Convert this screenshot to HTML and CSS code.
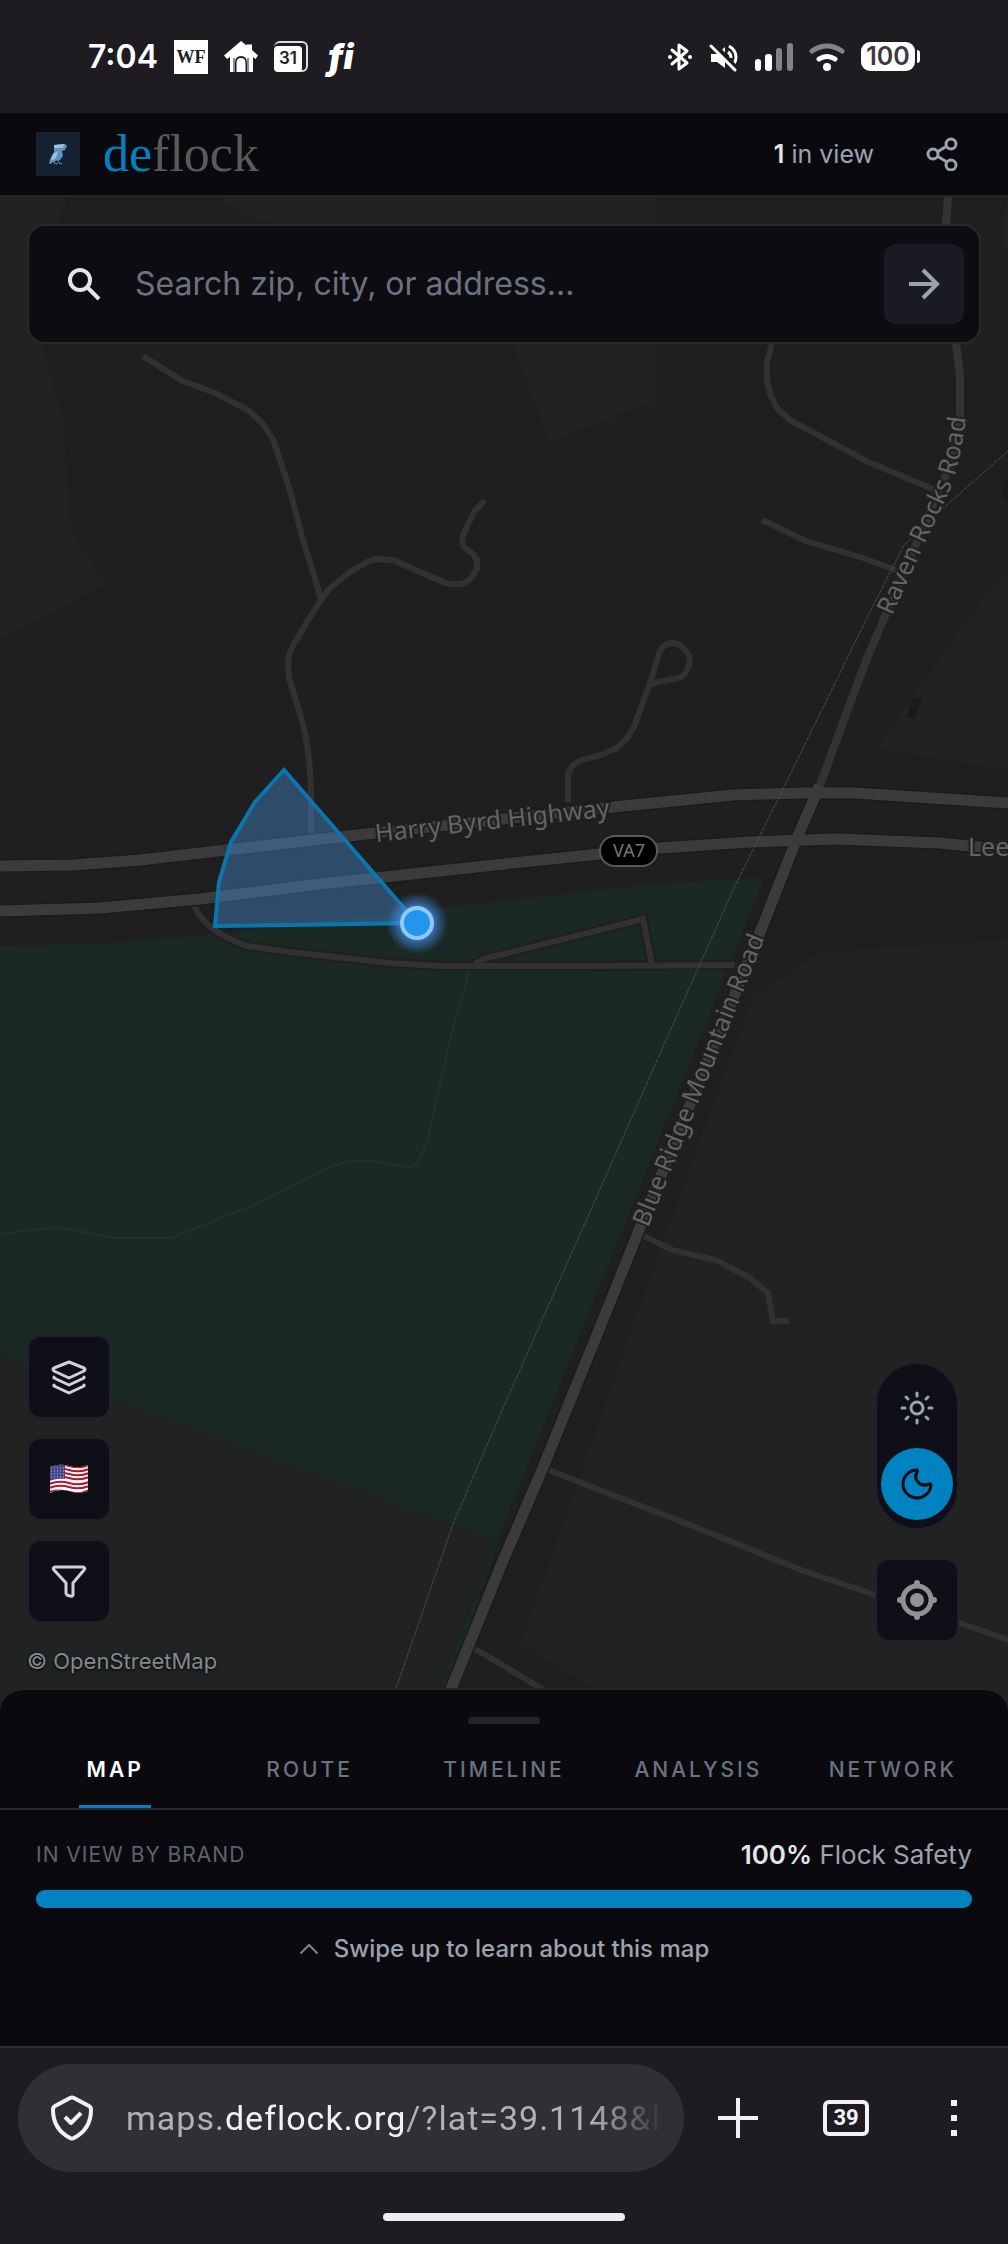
FILE: index.html
```html
<!DOCTYPE html>
<html lang="en">
<head>
<meta charset="utf-8">
<meta name="viewport" content="width=device-width, initial-scale=1">
<title>DeFlock Map</title>
<link rel="stylesheet" href="styles.css">
</head>
<body>
<div class="status">
  <div class="status-group status-left">
    <span class="clock">7:04</span>
    <span class="note-wf">WF</span>
    <svg class="note" viewBox="0 0 34 34"><path fill="#fff" d="M17 1 22.500 5.500V4.500H28V10L34 15.500 31.500 19 29 17V32H23V23Q23 16 17 16T11 23V32H6V17L3 19 0 15.500Z"/><path d="M24 18V32M10 18V32" stroke="#1e1c21" stroke-width="1"/><path fill="#fff" d="M12.500 32V23Q12.500 18 17 18T21.500 23V32Z"/></svg>
    <span class="note-cal"><span class="cal-day">31</span></span>
    <span class="note-fi">fi</span>
  </div>
  <div class="status-group status-right">
    <svg width="26" height="30" viewBox="0 0 26 30" fill="none" stroke="#fff" stroke-width="3" stroke-linecap="round" stroke-linejoin="round"><path d="M5 8 20 21 12 27V3L20 9 5 22"/><circle cx="3" cy="15" r="1" stroke-width="2"/><circle cx="23" cy="15" r="1" stroke-width="2"/></svg>
    <svg width="30" height="30" viewBox="0 0 30 30" fill="none"><path d="M2 12H8L16 5V26L8 20H2Z" fill="#fff"/><path d="M20 4Q27 8 27 15 27 19 25 22M19 10Q22 12 22 16" stroke="#fff" stroke-width="3"/><path d="M4 2 28 28" stroke="#1e1c21" stroke-width="6"/><path d="M2 4 26 28" stroke="#fff" stroke-width="3" stroke-linecap="round"/></svg>
    <svg width="38" height="28" viewBox="0 0 38 28"><rect y="16" width="6" height="12" rx="3" fill="#fff"/><rect x="10" y="11" width="7" height="17" rx="3" fill="#fff"/><rect x="21" y="5" width="6" height="23" rx="3" fill="#858387"/><rect x="32" width="6" height="28" rx="3" fill="#858387"/></svg>
    <svg width="36" height="28" viewBox="0 0 36 28" fill="none" stroke-linecap="round" stroke-width="5"><path d="M3 8Q18-2 33 8" stroke="#858387"/><path d="M10 16Q18 11 26 16" stroke="#fff"/><circle cx="18" cy="24" r="4" fill="#fff"/></svg>
    <span class="battery">100</span>
  </div>
</div>

<header class="topbar">
  <svg class="logo" viewBox="0 0 44 44"><rect width="44" height="44" fill="#152030"/><path fill="#5e92be" d="M18 13 29 12 31 14 29 18 26 19 27 24 24 28 19 29 14 32 13 31 15 25 18 20Z"/><path fill="#9cc2e0" d="M18 13 28 12 27 16 18 16ZM17 22 22 19 20 26 15 29Z"/><path d="M19 28 18 31 22 32M22 27 23 31 26 32M16 30 14 32" fill="none" stroke="#5e92be"/></svg>
  <a class="wordmark" href="#"><span class="wordmark-de">de</span>flock</a>
  <p class="count"><strong>1</strong> in view</p>
  <button class="share" aria-label="Share">
    <svg width="32" height="34" viewBox="0 0 32 34" fill="none" stroke="#9ca3af" stroke-width="3"><circle cx="25" cy="7" r="5"/><circle cx="7" cy="17" r="5"/><circle cx="25" cy="28" r="5"/><path d="M11 15 21 9M11 19 21 25"/></svg>
  </button>
</header>

<main class="map">
  <svg class="map-canvas" viewBox="0 197 1008 1515" preserveAspectRatio="xMidYMin slice" role="img" aria-label="Map">
    <defs>
      <path id="byrd" d="M376 842 613 816"/>
      <path id="raven" d="M892 616 925 543 949 492Q964 453 967 400"/>
      <path id="blue" d="M648 1228 772 920"/>
      <radialGradient id="glow"><stop offset=".5" stop-color="#4a9cf0" stop-opacity=".7"/><stop offset="1" stop-color="#3b82f6" stop-opacity="0"/></radialGradient>
    </defs>
    <rect y="197" width="1008" height="1515" fill="#1f1f1f"/>
    <g fill="#202321">
      <path d="M0 197H67L58 224 42 346 62 415 71 530 106 584 36 620 0 639Z"/>
      <path d="M218 197 245 216 280 225 513 344 549 442 655 400V197Z"/>
      <path d="M1008 570 966 620 877 748 1008 770ZM1008 200 1002 230 1008 263Z"/>
      <path d="M1008 940 819 952 754 997 737 1040 642 1300 521 1643 591 1687 640 1712H1008Z"/>
      <path d="M0 1354V1712H430L495 1540Z"/>
    </g>
    <g fill="#1a2924">
      <path d="M0 946 50 945 130 942 215 934 400 912 504 901 643 885 720 880 764 878 704 1028 594 1300 497 1541 350 1486 110 1396 0 1354Z"/>
      <path d="M495 1540 474 1600 430 1712H438L481 1602 477 1600 499 1540Z"/>
    </g>
    <path fill="#191a19" d="M913 697 922 699 915 719 907 717ZM1008 480 1001 493 1008 502Z"/>
    <path class="trail" d="M470 968 450 1040 430 1130Q420 1169 408 1167L387 1164Q350 1155 325 1170L258 1203 172 1238H115L57 1227 0 1234"/>
    <g class="casing">
      <path d="M194 905Q203 930 247 946L290 952 390 963 440 966H590L735 965M475 964 485 958 504 954 643 919 652 965"/>
    </g>
    <g class="lane">
      <path d="M143 356 181 380 215 393 248 410 262 423 273 439 289 487 303 540 317 585 321 600 308 620 299 636Q287 653 288 665L289 678 298 707Q311 745 311 800V835"/>
      <path d="M321 600 330 588 350 572 367 562 376 559 393 560 448 584H462L470 580 477 569V560L473 554 464 547 462 541 463 535 474 512 485 500"/>
      <path d="M568 802V774L573 765 582 760 601 755 617 748 627 738 634 727 651 680 659 653Q664 643 671 643 679 642 686 651 692 659 689 665 685 677 678 678L658 682 649 685"/>
      <path d="M772 344 767 362V380L770 394 777 408 790 420 868 462 938 491M762 520 806 541 863 558 898 571"/>
      <path d="M194 905Q203 930 247 946L290 952 390 963 440 966H590L735 965M475 964 485 958 504 954 643 919 652 965"/>
      <path d="M640 1234 672 1250 716 1260 750 1278 768 1293 773 1321H789M546 1469 690 1525 801 1570 960 1623 1008 1640M475 1649 504 1666 560 1700"/>
    </g>
    <path d="M948 197 946 224V300L956 344 960 375V415L951 463 922 530 889 607 868 656 855 690 820 785" fill="none" stroke="#333" stroke-width="8"/>
    <path class="highway-edge" d="M0 866 73 865 140 860 235 849 375 833 613 807 733 795 800 793H855L1008 803M0 911 100 908 200 899 320 884 504 864 590 855 660 848 750 842 837 839 940 843 1008 850M820 785 797 838 765 920 639 1230 611 1300 542 1470 502 1563 445 1704"/>
    <path class="highway" d="M0 866 73 865 140 860 235 849 375 833 613 807 733 795 800 793H855L1008 803M0 911 100 908 200 899 320 884 504 864 590 855 660 848 750 842 837 839 940 843 1008 850M820 785 797 838 765 920 639 1230 611 1300 542 1470 502 1563 445 1704"/>
    <path class="boundary" d="M1008 451 948 504 904 545 866 620 784 787 734 888 666 1040 551 1300 504 1406 453 1524 388 1712"/>
    <text class="road-label"><textPath href="#byrd">Harry Byrd Highway</textPath></text>
    <text class="road-label"><textPath href="#raven">Raven Rocks Road</textPath></text>
    <text class="road-label"><textPath href="#blue">Blue Ridge Mountain Road</textPath></text>
    <text class="road-label" x="968" y="856">Lee</text>
    <rect x="600" y="836" width="57" height="30" rx="15" fill="#000" stroke="#5a5a5a" stroke-width="2"/>
    <text class="shield" x="629" y="857">VA7</text>
    <path d="M417 923 284 770 255 802 231 842 219 882 215 926Z" fill="#478fdd" fill-opacity=".4" stroke="#0b76ad" stroke-width="4"/>
    <circle cx="417" cy="923" r="31" fill="url(#glow)"/>
    <circle cx="417" cy="923" r="15" fill="#2196ec" stroke="#90c8fb" stroke-width="4"/>
  </svg>

  <form class="search">
    <label class="search-icon" for="q" aria-label="Search">
      <svg width="34" height="34" viewBox="0 0 34 34" fill="none" stroke="#e5e5e8" stroke-width="4"><circle cx="13" cy="13" r="10"/><path d="M20 20 32 32"/></svg>
    </label>
    <input id="q" type="text" placeholder="Search zip, city, or address...">
    <button class="go" type="button" aria-label="Go">
      <svg width="32" height="32" viewBox="0 0 32 32" fill="none" stroke="#9ca3af" stroke-width="4"><path d="M1 16H29M15 2 29 16 15 30"/></svg>
    </button>
  </form>

  <div class="controls">
    <div class="tools">
      <button class="tool" aria-label="Layers">
        <svg width="36" height="36" viewBox="0 0 36 36" fill="none" stroke="#d1d1db" stroke-width="3" stroke-linejoin="round" stroke-linecap="round"><path d="M18 3 33 9Q35 10 33 12L18 19 3 12Q1 10 3 9ZM3 18V19L18 26 33 19V18M3 26V27L18 34 33 27V26"/></svg>
      </button>
      <button class="tool" aria-label="United States">
        <svg width="40" height="30" viewBox="0 0 40 30"><defs><clipPath id="wave"><path d="M1 3Q10-1 20 2T39 1V27Q30 30 20 27T1 29Z"/></clipPath></defs><g clip-path="url(#wave)"><rect width="40" height="30" fill="#fff"/><path d="M0 3Q10-1 20 2T40 1M0 7Q10 3 20 6T40 5M0 11Q10 7 20 10T40 9M0 15Q10 11 20 14T40 13M0 20Q10 16 20 19T40 18M0 24Q10 20 20 23T40 22M0 28Q10 25 20 28T40 26" fill="none" stroke="#b3162e" stroke-width="2"/><path d="M0 0H16V15Q8 14 0 17Z" fill="#45458a"/><path d="M2 4H16M2 7H16M2 10H16M2 13H16" stroke="#b9b9d8" stroke-dasharray="1 2"/></g></svg>
      </button>
      <button class="tool" aria-label="Filter">
        <svg width="36" height="36" viewBox="0 0 36 36" fill="none" stroke="#d1d1db" stroke-width="3" stroke-linejoin="round"><path d="M4 4H32Q35 5 33 7L22 20V32Q21 34 19 33L16 32Q15 31 15 30V20L3 7Q1 5 4 4Z"/></svg>
      </button>
      <a class="credit" href="#">© OpenStreetMap</a>
    </div>
    <div class="modes">
      <div class="theme">
        <button class="theme-option" aria-label="Light">
          <svg width="34" height="34" viewBox="0 0 34 34" fill="none" stroke="#9ca3af" stroke-width="3" stroke-linecap="round"><circle cx="17" cy="17" r="6"/><path d="M17 2V5M17 29V32M2 17H5M29 17H32M6 6 8 8M26 26 28 28M6 28 8 26M26 8 28 6"/></svg>
        </button>
        <button class="theme-option theme-active" aria-label="Dark">
          <svg width="34" height="34" viewBox="0 0 34 34" fill="none" stroke="#0b0b10" stroke-width="3" stroke-linejoin="round"><path d="M17 3Q18 3 17 5 14 11 18 15 22 20 29 17 31 16 31 18A14 14 0 1 1 17 3Z"/></svg>
        </button>
      </div>
      <button class="tool" aria-label="Locate me">
        <svg width="40" height="40" viewBox="0 0 40 40"><circle cx="20" cy="20" r="14" fill="none" stroke="#919191" stroke-width="5"/><circle cx="20" cy="20" r="7" fill="#919191"/><path d="M20 4V3M20 36V37M4 20H3M36 20H37" stroke="#919191" stroke-width="6" stroke-linecap="round"/></svg>
      </button>
    </div>
  </div>
</main>

<section class="sheet">
  <div class="handle"></div>
  <nav class="tabs">
    <a class="tab tab-active" href="#">MAP</a>
    <a class="tab" href="#">ROUTE</a>
    <a class="tab" href="#">TIMELINE</a>
    <a class="tab" href="#">ANALYSIS</a>
    <a class="tab" href="#">NETWORK</a>
  </nav>
  <div class="brands">
    <div class="brands-head">
      <h2>IN VIEW BY BRAND</h2>
      <p><strong>100%</strong> Flock Safety</p>
    </div>
    <div class="meter"><div class="meter-fill" style="width:100%"></div></div>
    <p class="hint">
      <svg width="20" height="12" viewBox="0 0 20 12" fill="none" stroke="#7c828d" stroke-width="2" stroke-linecap="round"><path d="M2 10 10 2 18 10"/></svg>
      Swipe up to learn about this map
    </p>
  </div>
</section>

<footer class="browser">
  <div class="browser-row">
    <button class="url">
      <svg width="42" height="46" viewBox="0 0 42 46" fill="none" stroke="#f3f1f8" stroke-width="4" stroke-linejoin="round"><path d="M19 3Q21 2 23 3L38 11Q40 12 40 15 40 34 23 43 21 44 19 43 2 34 2 15 2 12 4 11Z"/><path d="M14 22 20 28 30 18"/></svg>
      <span class="url-text">maps.<span class="url-host">deflock.org</span>/?lat=39.1148&amp;l</span>
    </button>
    <button class="bar-button" aria-label="New tab"><svg width="40" height="40" viewBox="0 0 40 40"><path d="M20 0V40M0 20H40" stroke="#f3f1f8" stroke-width="4"/></svg></button>
    <button class="bar-button" aria-label="Tabs"><span class="tab-count">39</span></button>
    <button class="bar-button" aria-label="Menu"><svg width="6" height="36" viewBox="0 0 6 36" fill="#f3f1f8"><path d="M0 0H6V6H0ZM0 15H6V21H0ZM0 30H6V36H0Z"/></svg></button>
  </div>
  <div class="home-bar"></div>
</footer>
</body>
</html>
```
FILE: styles.css
```css
* { box-sizing: border-box; }

body {
  margin: 0;
  min-height: 100vh;
  display: flex;
  flex-direction: column;
  background: #0a0a0e;
  color: #9ca3af;
  font-family: Inter, "Liberation Sans", sans-serif;
  font-size: 25px;
}

button {
  display: flex;
  align-items: center;
  justify-content: center;
  margin: 0;
  padding: 0;
  border: 0;
  background: none;
  font: inherit;
  color: inherit;
}

svg { flex: none; display: block; }
p, h2 { margin: 0; }
a { color: inherit; text-decoration: none; }
strong { color: #e5e5e8; font-weight: 600; }

/* Phone status bar */
.status {
  height: 113px;
  padding: 0 88px;
  display: flex;
  align-items: center;
  justify-content: space-between;
  background: #1e1c21;
  color: #fff;
}
.status-group { display: flex; align-items: center; }
.status-left { gap: 16px; }
.status-right { gap: 16px; }
.clock { font-size: 32px; font-weight: 600; line-height: 40px; }
.note { width: 34px; height: 34px; }
.note-wf {
  width: 34px;
  background: #fff;
  color: #1e1c21;
  font: bold 18px/34px "Liberation Serif", serif;
  text-align: center;
}
.note-cal {
  width: 34px;
  height: 31px;
  padding-top: 3px;
  border: 2px solid #ddd;
  border-left: 0;
  border-radius: 6px;
}
.cal-day {
  display: block;
  width: 28px;
  height: 26px;
  border-radius: 4px;
  background: #fff;
  color: #1e1c21;
  font-size: 17px;
  font-weight: 600;
  line-height: 24px;
  text-align: center;
}
.note-fi {
  padding-left: 4px;
  font: italic 900 34px/34px Inter, sans-serif;
  font-variant-ligatures: none;
}
.battery {
  position: relative;
  width: 54px;
  margin-right: 5px;
  border-radius: 9px;
  background: #fff;
  color: #3c3b3e;
  font-size: 25px;
  font-weight: 600;
  line-height: 29px;
  text-align: center;
}
.battery::after {
  content: "";
  position: absolute;
  left: 56px;
  top: 8px;
  width: 3px;
  height: 13px;
  border-radius: 0 3px 3px 0;
  background: #fff;
}

/* App header */
.topbar {
  height: 84px;
  padding: 0 36px;
  display: flex;
  align-items: center;
  border-bottom: 2px solid #242428;
}
.logo { width: 44px; height: 44px; margin-right: 23px; }
.wordmark {
  margin-right: auto;
  color: #5a5a5a;
  font: 52px/60px "Liberation Serif", serif;
}
.wordmark-de { color: #0081c0; }
.count { line-height: 32px; }
.share { width: 60px; height: 60px; margin-left: 38px; }

/* Map */
.map {
  position: relative;
  flex: 1;
  padding: 27px 27px 9px;
  display: flex;
  flex-direction: column;
  justify-content: space-between;
  gap: 48px;
}
.map-canvas {
  position: absolute;
  z-index: -1;
  left: 0;
  top: 0;
  width: 100%;
  height: calc(100% + 24px);
}
.lane, .casing, .trail, .highway, .highway-edge, .boundary { fill: none; }
.lane { stroke: #323132; stroke-width: 6; }
.casing { stroke: #1f1f1f; stroke-width: 10; }
.trail { stroke: #22312c; stroke-width: 2; }
.highway { stroke: #3b3b3b; stroke-width: 11; }
.highway-edge { stroke: #1b1b1b; stroke-width: 14; }
.boundary { stroke: #4a4b55; stroke-width: 1; stroke-dasharray: 4 1; }
.road-label {
  fill: #646464;
  stroke: #1f1f1f;
  stroke-width: 4px;
  paint-order: stroke;
  font: 25px "Noto Sans", sans-serif;
}
.shield { fill: #777; font: 18px "Noto Sans", sans-serif; text-anchor: middle; }

.search {
  height: 120px;
  padding: 0 15px 0 38px;
  display: flex;
  align-items: center;
  border: 2px solid #28282d;
  border-radius: 18px;
  background: #0d0c11;
}
.search input {
  flex: 1;
  min-width: 0;
  padding: 0 0 0 34px;
  border: 0;
  outline: 0;
  background: none;
  color: #e5e5e8;
  font: inherit;
  font-size: 32px;
  line-height: 48px;
}
.search input::placeholder { color: #6b7280; opacity: 1; }
.go { width: 80px; height: 80px; border-radius: 12px; background: #191a24; }

.controls { display: flex; justify-content: space-between; align-items: flex-end; }
.tools { display: flex; flex-direction: column; gap: 18px; }
.tool {
  width: 84px;
  height: 84px;
  border: 2px solid #20202c;
  border-radius: 14px;
  background: #0f0f17;
}
.credit {
  padding-top: 2px;
  color: #838891;
  font-size: 22px;
  line-height: 36px;
  text-shadow: 0 1px 3px #000;
}
.modes { padding: 0 22px 37px 0; display: flex; flex-direction: column; gap: 28px; }
.theme {
  width: 84px;
  padding: 8px 4px;
  display: flex;
  flex-direction: column;
  align-items: center;
  gap: 4px;
  border: 2px solid #20202c;
  border-radius: 42px;
  background: #0f0f17;
}
.theme-option { width: 72px; height: 72px; border-radius: 36px; }
.theme-active { background: #0081c0; }

/* Bottom sheet */
.sheet {
  padding-top: 27px;
  border-top: 2px solid #242428;
  border-radius: 24px 24px 0 0;
  background: #0a0a0e;
}
.handle { width: 72px; height: 7px; margin: 0 auto; border-radius: 4px; background: #24242e; }
.tabs {
  padding: 0 18px;
  display: grid;
  grid-template-columns: repeat(5, 1fr);
  justify-items: center;
  border-bottom: 2px solid #28282d;
}
.tab {
  min-width: 72px;
  padding: 31px 0 20px;
  border-bottom: 3px solid transparent;
  color: #6b7280;
  font-size: 21px;
  font-weight: 500;
  line-height: 30px;
  letter-spacing: 3px;
  text-align: center;
}
.tab-active { border-color: #0081c0; color: #fff; font-weight: 600; }
.brands { padding: 25px 36px 81px; }
.brands-head {
  display: flex;
  align-items: center;
  justify-content: space-between;
  font-size: 26px;
  line-height: 40px;
}
.brands-head h2 { color: #5c6370; font-size: 21px; font-weight: 400; letter-spacing: 1px; }
.meter { margin: 15px 0 25px; border-radius: 9px; background: #24242e; }
.meter-fill { height: 18px; border-radius: 9px; background: #0081c0; }
.hint {
  display: flex;
  align-items: center;
  justify-content: center;
  gap: 15px;
  font-size: 24px;
  font-weight: 500;
  line-height: 32px;
}

/* Browser toolbar */
.browser {
  padding: 16px 0 23px;
  border-top: 2px solid #302f34;
  background: #1e1c21;
}
.browser-row { padding-left: 18px; display: flex; align-items: center; }
.url {
  flex: 1;
  min-width: 0;
  height: 108px;
  padding: 0 20px 0 33px;
  justify-content: flex-start;
  gap: 33px;
  border-radius: 54px;
  background: #312f34;
}
.url-text {
  flex: 1;
  overflow: hidden;
  color: #b2b0b6;
  font: 34px/54px Roboto, sans-serif;
  letter-spacing: 1px;
  text-align: left;
  white-space: nowrap;
  -webkit-mask-image: linear-gradient(to left, transparent, #000 72px);
  mask-image: linear-gradient(to left, transparent, #000 72px);
}
.url-host { color: #f3f1f8; }
.bar-button { width: 108px; height: 108px; }
.tab-count {
  width: 46px;
  border: 4px solid #f3f1f8;
  border-radius: 6px;
  color: #f3f1f8;
  font: bold 22px/28px Roboto, sans-serif;
  text-align: center;
}
.home-bar { width: 242px; height: 8px; margin: 41px auto 0; border-radius: 4px; background: #ededed; }
```
